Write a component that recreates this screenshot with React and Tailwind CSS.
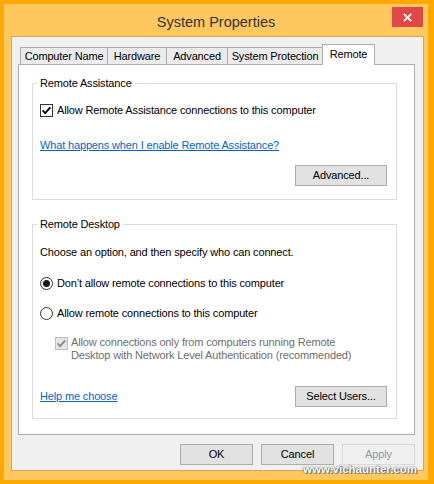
import React from "react";

const tabs = [
  { label: "Computer Name", w: "w-[88px]" },
  { label: "Hardware", w: "w-[60px] -ml-px" },
  { label: "Advanced", w: "w-[62px] -ml-px" },
  { label: "System Protection", w: "w-[96px] -ml-px" },
];

const Check = ({ disabled }) => (
  <span
    className={`flex h-[13px] w-[13px] shrink-0 items-center justify-center border ${
      disabled ? "border-[#BCBCBC] bg-[#E6E6E6]" : "border-[#333333] bg-white"
    }`}
  >
    <svg width="11" height="11" viewBox="0 0 11 11">
      <path
        d="M1.6 5.4 L4.2 8.1 L9.3 2.4"
        fill="none"
        stroke={disabled ? "#8A8A8A" : "#000000"}
        strokeWidth="1.9"
      />
    </svg>
  </span>
);

const Radio = ({ checked }) => (
  <span className="flex h-[13px] w-[13px] shrink-0 items-center justify-center rounded-full border border-[#333333] bg-white">
    {checked && <span className="h-[7px] w-[7px] rounded-full bg-[#1A1A1A]" />}
  </span>
);

const Button = ({ children, className = "" }) => (
  <button
    type="button"
    className={`flex h-[21px] items-center justify-center border border-[#ADADAD] bg-[#E1E1E1] text-black ${className}`}
  >
    {children}
  </button>
);

const Group = ({ title, className = "", children }) => (
  <div className={`flex w-[365px] flex-col border border-[#DCDCDC] pl-[7px] pr-[9px] ${className}`}>
    <span className="-ml-[3px] -mt-[8px] w-fit bg-white px-[3px] leading-[15px]">{title}</span>
    {children}
  </div>
);

const App = () => {
  return (
    <div className="h-[484px] w-[434px] overflow-hidden bg-[#FFA800] pl-[4px] pt-[4px] font-['Liberation_Sans',Arial,sans-serif] text-[11px] tracking-[-0.15px] text-black">
      <div className="relative flex h-[476px] w-[424px] flex-col bg-[#FFC85F]">
        {/* title bar */}
        <div className="relative flex h-[32px] shrink-0 items-center justify-center pt-[6px] text-[14.5px] tracking-normal text-[#333333]">
          System Properties
          <div className="absolute right-[5px] top-[3px] flex h-[20px] w-[31px] items-center justify-center bg-[#E04848]">
            <svg width="9" height="9" viewBox="0 0 9 9">
              <path d="M0.8 0.8 L8.2 8.2 M8.2 0.8 L0.8 8.2" stroke="#FFFFFF" strokeWidth="1.8" />
            </svg>
          </div>
        </div>

        {/* client area */}
        <div className="ml-[7px] flex h-[435px] w-[413px] flex-col border border-[#D6A65E] bg-[#F0F0F0] pl-[6px] pt-[7px]">
          <div className="flex h-[20px] items-end pl-[2px]">
            {tabs.map((t) => (
              <div
                key={t.label}
                className={`flex h-[17px] items-center justify-center border-x border-t border-[#ADADAD] bg-[#EBEBEB] ${t.w}`}
              >
                {t.label}
              </div>
            ))}
            <div className="relative z-10 -mb-px -ml-px flex h-[21px] w-[53px] items-center justify-center border-x border-t border-[#ADADAD] bg-white pb-[1px]">
              Remote
            </div>
          </div>

          <div className="flex h-[371px] w-[397px] flex-col border border-[#ADADAD] bg-white pl-[13px]">
            <Group title="Remote Assistance" className="mt-[18px] pb-[13px]">
              <div className="mt-[13px] flex h-[13px] items-center gap-[4px]">
                <Check />
                <span className="leading-[15px]">Allow Remote Assistance connections to this computer</span>
              </div>
              <a className="mt-[21px] w-fit leading-[15px] text-[#0066CC] underline">
                What happens when I enable Remote Assistance?
              </a>
              <div className="mt-[12px] flex justify-end">
                <Button className="w-[92px]">Advanced...</Button>
              </div>
            </Group>

            <Group title="Remote Desktop" className="mt-[24px] pb-[11px]">
              <p className="mt-[13px] leading-[15px]">Choose an option, and then specify who can connect.</p>
              <div className="mt-[16px] flex h-[15px] items-center gap-[4px]">
                <Radio checked />
                <span>Don’t allow remote connections to this computer</span>
              </div>
              <div className="mt-[15px] flex h-[15px] items-center gap-[4px]">
                <Radio />
                <span>Allow remote connections to this computer</span>
              </div>
              <div className="mt-[15px] flex gap-[3px] pl-[15px]">
                <div className="mt-[1px]">
                  <Check disabled />
                </div>
                <p className="leading-[13px] text-[#6D6D6D]">
                  Allow connections only from computers running Remote
                  <br />
                  Desktop with Network Level Authentication (recommended)
                </p>
              </div>
              <div className="mt-[24px] flex h-[21px] items-center justify-between">
                <a className="leading-[15px] text-[#0066CC] underline">Help me choose</a>
                <Button className="w-[92px]">Select Users...</Button>
              </div>
            </Group>
          </div>

          <div className="ml-[162px] mt-[9px] flex gap-[8px]">
            <Button className="w-[73px] border-[#3399FF]">OK</Button>
            <Button className="w-[73px]">Cancel</Button>
            <button
              type="button"
              className="flex h-[21px] w-[73px] items-center justify-center border border-[#D9D9D9] bg-[#EFEFEF] text-[#8F98A8]"
            >
              Apply
            </button>
          </div>
        </div>

        {/* watermark */}
        <span className="absolute left-[299px] top-[458px] text-[11.5px] font-bold leading-[14px] tracking-normal text-white [text-shadow:0_0_1px_#555,0_0_1px_#555,1px_1px_0_#888]">
          www.vichaunter.com
        </span>
      </div>
    </div>
  );
};

export default App;
